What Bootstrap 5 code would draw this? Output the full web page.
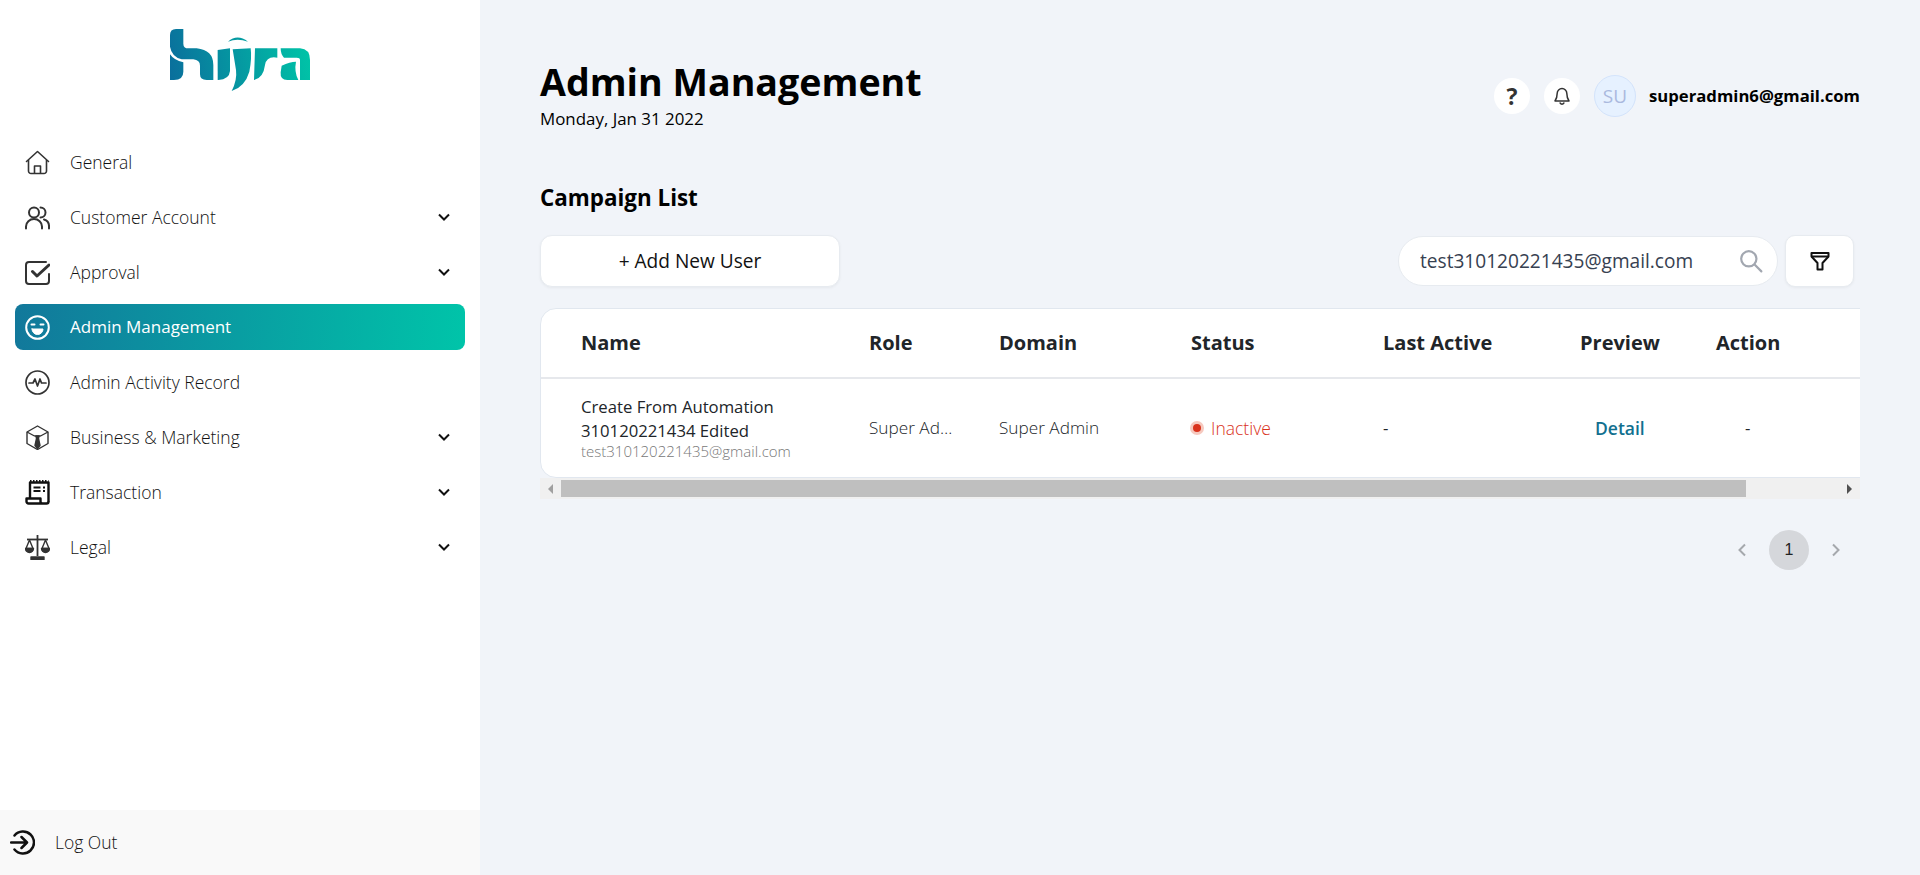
<!DOCTYPE html>
<html lang="en">

<head>
  <meta charset="UTF-8">
  <meta name="viewport" content="width=device-width, initial-scale=1.0">
  <title>Admin Management</title>
  <link href="https://cdn.jsdelivr.net/npm/bootstrap@5.3.0/dist/css/bootstrap.min.css" rel="stylesheet">
  <style>
    body { font-family: "Open Sans", "Liberation Sans", sans-serif; background: #f1f4f9; color: #000; height: 100vh; overflow: hidden; }
    .side-panel { width: 480px; height: 100vh; background: #fff; flex-shrink: 0; }
    .logo-box { padding-top: 29px; height: 139px; }
    .side-link { height: 46px; margin: 0 15px 9px; padding: 0 10px; border-radius: 8px; color: #111; font-weight: 300; font-size: 17.5px; }
    .side-link:hover { color: #111; }
    .side-link .ico { width: 25px; height: 25px; margin-right: 20px; flex-shrink: 0; }
    .side-link .chev { margin-left: auto; margin-right: 5px; }
    .side-link.is-active { background: linear-gradient(95deg, #12789b, #00c4a9); color: #fff; font-weight: 500; font-size: 17px; }
    .logout-bar { height: 65px; background: #f9f9f9; padding-left: 10px; font-weight: 300; font-size: 17.5px; color: #111; }
    .logout-bar svg { margin-right: 20px; }
    .main-area { padding: 58px 60px 0; min-width: 0; }
    .page-title { font-size: 37.6px; font-weight: 700; line-height: 48px; margin: 0 0 3px; }
    .page-date { font-size: 16.9px; font-weight: 400; line-height: 20px; }
    .round-ico { width: 36px; height: 36px; background: #fff; font-weight: 700; font-size: 23px; color: #333; }
    .avatar-ico { width: 42px; height: 42px; background: #e6f1ff; border: 1px solid #d3e3fb; color: #aab9de; font-size: 19px; }
    .user-mail { font-size: 16.7px; font-weight: 700; }
    .section-title { font-size: 22.4px; font-weight: 700; line-height: 30px; margin: 54px 0 22px; }
    .add-btn { width: 300px; height: 52px; background: #fff; border: 1px solid #e7ebf0; border-radius: 12px; font-size: 19.1px; color: #111; box-shadow: 0 1px 3px rgba(0, 0, 0, .05); }
    .search-box { width: 380px; height: 50px; background: #fff; border: 1px solid #e7ebf0; border-radius: 25px; padding: 0 14px 0 19px; }
    .search-box input { border: 0; outline: 0; flex: 1; min-width: 0; font-size: 19.1px; color: #374151; font-family: inherit; background: transparent; }
    .filter-btn { width: 69px; height: 52px; background: #fff; border: 1px solid #e7ebf0; border-radius: 10px; box-shadow: 0 1px 3px rgba(0, 0, 0, .05); }
    .table-clip { overflow: hidden; margin-top: 21px; }
    .table-box { width: 1423px; background: #fff; border: 1px solid #e1e7ef; border-radius: 16px; overflow: hidden; }
    .user-table { table-layout: fixed; margin: 0; width: 1421px; }
    .user-table th { height: 69px; padding: 0; vertical-align: middle; font-size: 20px; font-weight: 700; border-bottom: 2px solid #e6e8ec; }
    .user-table td { height: 99px; padding: 0; vertical-align: middle; font-size: 16.7px; font-weight: 400; border-bottom: 0; line-height: 24px; }
    .user-table .name-cell { padding-left: 40px; padding-right: 80px; }
    .user-table td.name-cell { padding-bottom: 2px; }
    .user-mail-sub { font-size: 15px; font-weight: 300; color: #777; line-height: 16px; }
    .role-cell { padding-right: 44px !important; }
    .light-text { font-weight: 300 !important; font-size: 17.2px !important; }
    .status-dot { width: 8px; height: 8px; background: #d9321c; box-shadow: 0 0 0 3px #f6c9bf; margin: 0 10px 0 2px; }
    .status-off { color: #d9321c; font-weight: 300; font-size: 17.5px; }
    .detail-link { color: #11708f; font-weight: 600; font-size: 17.5px; text-decoration: none; margin-left: 15px; }
    .dash-cell { padding-left: 29px !important; }
    .bar-x { height: 21px; background: #f0f0f0; }
    .bar-btn { width: 21px; flex-shrink: 0; }
    .bar-left { width: 0; height: 0; border-top: 5px solid transparent; border-bottom: 5px solid transparent; border-right: 5px solid #a0a0a0; }
    .bar-right { width: 0; height: 0; border-top: 5px solid transparent; border-bottom: 5px solid transparent; border-left: 5px solid #505050; }
    .bar-thumb { height: 17px; background: #bfbfbf; }
    .pager-num { width: 40px; height: 40px; background: #d5d7db; font-size: 16px; font-family: "Liberation Sans", sans-serif; color: #222; }
    .pager-row { margin-top: 31px; padding-right: 19px; gap: 22px; }
  </style>
</head>

<body>
  <div class="d-flex">
    <!-- Sidebar -->
    <aside class="side-panel d-flex flex-column">
      <div class="logo-box d-flex justify-content-center align-items-start">
        <svg width="140" height="62" viewBox="60 42 420 186">
          <defs>
            <linearGradient id="logoGrad" gradientUnits="userSpaceOnUse" x1="60" y1="180" x2="480" y2="100">
              <stop offset="0" stop-color="#0a6f9c" />
              <stop offset="1" stop-color="#00c4a7" />
            </linearGradient>
          </defs>
          <g fill="url(#logoGrad)">
            <path d="M60 60Q60 42 78 42H100V86Q100 100 115 100H140Q190 105 190 150V195H170Q150 195 150 178V152Q150 135 130 133H95Q65 125 60 95Z" />
            <path d="M60 118Q72 136 100 142V170Q100 195 72 195H60Z" />
            <path d="M203 105L240 100V168Q238 193 205 195H203Z" />
            <path d="M234 80Q262 55 294 80Q262 68 234 80Z" />
            <path d="M248 103L302 100Q306 130 298 170Q285 215 245 228Q262 195 258 165Z" />
            <path d="M315 100H382V128Q350 122 345 150Q340 190 312 195Z" />
            <path d="M392 100H450Q480 102 480 135V195H450V135Q450 128 440 128H402Q392 118 392 100Z" />
            <path d="M395 152Q420 140 438 140Q432 170 445 195H412Q390 195 392 172Z" />
          </g>
        </svg>
      </div>

      <nav class="d-flex flex-column">
        <a href="#" class="side-link d-flex align-items-center text-decoration-none">
          <svg class="ico" viewBox="0 0 25 25" fill="none" stroke="#333" stroke-width="1.6" stroke-linejoin="round">
            <path d="M1.5 11.5L12.5 1.5l11 10" stroke-linecap="round" />
            <path d="M3.5 10v11a2.5 2.5 0 0 0 2.5 2.5h13a2.5 2.5 0 0 0 2.5-2.5V10" />
            <path d="M9.5 23.5v-7.5h6v7.5" />
          </svg>
          General
        </a>
        <a href="#" class="side-link d-flex align-items-center text-decoration-none">
          <svg class="ico" viewBox="0 0 25 25" fill="none" stroke="#333" stroke-width="2" stroke-linecap="round">
            <circle cx="9" cy="7.5" r="5" />
            <path d="M1 23.5v-2a8 7.5 0 0 1 16 0v2" />
            <path d="M15.5 2.5a5 5 0 0 1 0 10" />
            <path d="M19 14.5a7 7 0 0 1 5 7v2" />
          </svg>
          Customer Account
          <svg class="chev" width="12" height="8" viewBox="0 0 12 8" fill="none" stroke="#111" stroke-width="2"><path d="M1 1.5l5 5 5-5" /></svg>
        </a>
        <a href="#" class="side-link d-flex align-items-center text-decoration-none">
          <svg class="ico" viewBox="0 0 25 25" fill="none" stroke="#333" stroke-width="2" stroke-linecap="round" stroke-linejoin="round">
            <path d="M21 2H4a3 3 0 0 0-3 3v16a3 3 0 0 0 3 3h17a3 3 0 0 0 3-3v-7" />
            <path d="M7.5 11.5l4.5 4.5L24 5" stroke-width="3" />
          </svg>
          Approval
          <svg class="chev" width="12" height="8" viewBox="0 0 12 8" fill="none" stroke="#111" stroke-width="2"><path d="M1 1.5l5 5 5-5" /></svg>
        </a>
        <a href="#" class="side-link is-active d-flex align-items-center text-decoration-none">
          <svg class="ico" viewBox="0 0 25 25" fill="none" stroke="#fff" stroke-width="2" stroke-linecap="round">
            <circle cx="12.5" cy="12.5" r="11.3" />
            <path d="M6.5 9.5h3M15.5 9.5h3" />
            <path d="M7 14h11a5.5 5.5 0 0 1-11 0z" fill="#fff" stroke-width="1" />
          </svg>
          Admin Management
        </a>
        <a href="#" class="side-link d-flex align-items-center text-decoration-none">
          <svg class="ico" viewBox="0 0 25 25" fill="none" stroke="#333" stroke-width="1.7" stroke-linejoin="round">
            <circle cx="12.5" cy="12.5" r="11.5" />
            <path d="M4 13h4l2-4 2.5 7 2.5-7 1.5 4h4.5" stroke-linecap="round" />
          </svg>
          Admin Activity Record
        </a>
        <a href="#" class="side-link d-flex align-items-center text-decoration-none">
          <svg class="ico" viewBox="0 0 25 25" fill="none" stroke="#333" stroke-width="1.4" stroke-linejoin="round">
            <path d="M12.5 1l10.5 6v11.5L12.5 24.5 2 18.500V7z" />
            <path d="M2 7l7.500 4M23 7l-7.500 4M9.500 11h6" />
            <path d="M11 11h3l-.5 2.500 1.500 7-2.500 3-2.500-3 1.500-7z" fill="#333" />
          </svg>
          Business &amp; Marketing
          <svg class="chev" width="12" height="8" viewBox="0 0 12 8" fill="none" stroke="#111" stroke-width="2"><path d="M1 1.5l5 5 5-5" /></svg>
        </a>
        <a href="#" class="side-link d-flex align-items-center text-decoration-none">
          <svg class="ico" viewBox="0 0 25 25" fill="none" stroke="#111" stroke-width="2.4" stroke-linejoin="round">
            <path d="M5 18V2.500h18.500V22" />
            <path d="M5 1.500h18.500" stroke-dasharray="1.500 1.500" stroke-width="3" />
            <path d="M1.500 18.500h14v3a2 2 0 0 0 2 2H3.500a2 2 0 0 1-2-2zM17.500 23.500h4a2 2 0 0 0 2-2" />
            <path d="M8.500 7.500h7M8.500 11h7" stroke-width="2.200" />
            <path d="M18 7.500h2.500M18 11h2.500" stroke-width="2.200" stroke-dasharray="2 1" />
          </svg>
          Transaction
          <svg class="chev" width="12" height="8" viewBox="0 0 12 8" fill="none" stroke="#111" stroke-width="2"><path d="M1 1.5l5 5 5-5" /></svg>
        </a>
        <a href="#" class="side-link d-flex align-items-center text-decoration-none">
          <svg class="ico" viewBox="0 0 25 25" fill="none" stroke="#333" stroke-width="1.400" stroke-linejoin="round">
            <path d="M12.500 0v21" stroke-width="1.800" />
            <path d="M2 4.500h21" stroke-width="1.800" />
            <path d="M4.500 5L1 13.500h7zM20.500 5L17 13.500h7z" />
            <path d="M.5 13.500h8a4 4 0 0 1-8 0zM16.500 13.500h8a4 4 0 0 1-8 0z" fill="#333" />
            <path d="M6 22h13v2.500H6z" fill="#333" />
          </svg>
          Legal
          <svg class="chev" width="12" height="8" viewBox="0 0 12 8" fill="none" stroke="#111" stroke-width="2"><path d="M1 1.5l5 5 5-5" /></svg>
        </a>
      </nav>

      <div class="logout-bar mt-auto d-flex align-items-center">
        <svg width="25" height="25" viewBox="0 0 25 25" fill="none" stroke="#111" stroke-width="2.500" stroke-linecap="round" stroke-linejoin="round">
          <path d="M4.500 5.500a11 11 0 1 1 0 14" />
          <path d="M1 12.500h15M11.500 7l5.500 5.500-5.500 5.500" />
        </svg>
        Log Out
      </div>
    </aside>

    <!-- Content -->
    <main class="main-area flex-grow-1">
      <div class="d-flex justify-content-between align-items-start">
        <div>
          <h1 class="page-title">Admin Management</h1>
          <div class="page-date">Monday, Jan 31 2022</div>
        </div>
        <div class="d-flex align-items-center" style="margin-top: 17px">
          <span class="round-ico rounded-circle d-flex align-items-center justify-content-center" style="margin-right: 14px">?</span>
          <span class="round-ico rounded-circle d-flex align-items-center justify-content-center" style="margin-right: 14px">
            <svg width="16" height="19" viewBox="0 0 16 19" fill="none" stroke="#333" stroke-width="1.500" stroke-linejoin="round">
              <path d="M8 1.500a4.800 4.800 0 0 0-4.800 4.800c0 4-1.200 6.200-2.200 7.700h14c-1-1.500-2.200-3.700-2.200-7.700A4.800 4.800 0 0 0 8 1.500z" />
              <path d="M5.800 15.500a2.300 2.300 0 0 0 4.400 0" />
            </svg>
          </span>
          <span class="avatar-ico rounded-circle d-flex align-items-center justify-content-center" style="margin-right: 13px">SU</span>
          <span class="user-mail">superadmin6@gmail.com</span>
        </div>
      </div>

      <h2 class="section-title">Campaign List</h2>

      <div class="d-flex justify-content-between align-items-center">
        <button class="add-btn">+ Add New User</button>
        <div class="d-flex align-items-center" style="gap: 7px; margin-right: 6px">
          <div class="search-box d-flex align-items-center">
            <input type="text" value="test310120221435@gmail.com">
            <svg width="24" height="24" viewBox="0 0 22 22" fill="none" stroke="#a2a7b0" stroke-width="2" stroke-linecap="round">
              <circle cx="9" cy="9" r="7" />
              <path d="M14.500 14.500l6 6" />
            </svg>
          </div>
          <button class="filter-btn d-flex align-items-center justify-content-center">
            <svg width="20" height="20" viewBox="0 0 20 20" fill="none" stroke="#111" stroke-width="2" stroke-linejoin="round">
              <path d="M1.500 2h17v3.500l-6 6.500v6.500h-5V12l-6-6.500z" />
              <path d="M1.500 5.500h17" />
            </svg>
          </button>
        </div>
      </div>

      <div class="table-clip">
        <div class="table-box">
          <table class="table user-table">
            <colgroup>
              <col style="width: 328px">
              <col style="width: 130px">
              <col style="width: 192px">
              <col style="width: 192px">
              <col style="width: 197px">
              <col style="width: 136px">
              <col>
            </colgroup>
            <thead>
              <tr>
                <th class="name-cell">Name</th>
                <th>Role</th>
                <th>Domain</th>
                <th>Status</th>
                <th>Last Active</th>
                <th>Preview</th>
                <th>Action</th>
              </tr>
            </thead>
            <tbody>
              <tr>
                <td class="name-cell">
                  <div>Create From Automation 310120221434 Edited</div>
                  <div class="user-mail-sub">test310120221435@gmail.com</div>
                </td>
                <td class="role-cell text-truncate light-text">Super Admin</td>
                <td class="light-text">Super Admin</td>
                <td>
                  <div class="d-flex align-items-center">
                    <span class="status-dot rounded-circle"></span>
                    <span class="status-off">Inactive</span>
                  </div>
                </td>
                <td>-</td>
                <td><a href="#" class="detail-link">Detail</a></td>
                <td class="dash-cell">-</td>
              </tr>
            </tbody>
          </table>
        </div>
      </div>

      <!-- Scrollbar of the table -->
      <div class="bar-x d-flex align-items-center">
        <div class="bar-btn d-flex align-items-center justify-content-center"><span class="bar-left"></span></div>
        <div class="flex-grow-1"><div class="bar-thumb" style="width: 1185px"></div></div>
        <div class="bar-btn d-flex align-items-center justify-content-center"><span class="bar-right"></span></div>
      </div>

      <div class="pager-row d-flex justify-content-end align-items-center">
        <svg width="10" height="14" viewBox="0 0 10 14" fill="none" stroke="#a5a8ad" stroke-width="2"><path d="M8 1.500L2.500 7 8 12.500" /></svg>
        <span class="pager-num rounded-circle d-flex align-items-center justify-content-center">1</span>
        <svg width="10" height="14" viewBox="0 0 10 14" fill="none" stroke="#a5a8ad" stroke-width="2"><path d="M2 1.500L7.500 7 2 12.500" /></svg>
      </div>
    </main>
  </div>

  <script src="https://cdn.jsdelivr.net/npm/bootstrap@5.3.0/dist/js/bootstrap.bundle.min.js"></script>
</body>

</html>
